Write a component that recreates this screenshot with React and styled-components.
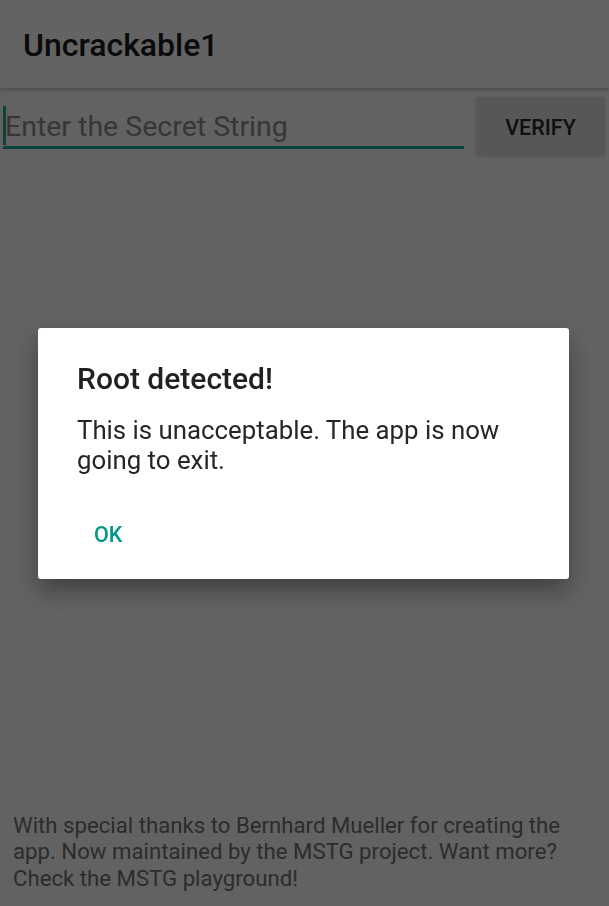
import React from "react";
import styled, { createGlobalStyle } from "styled-components";

const GlobalStyle = createGlobalStyle`
  html, body {
    margin: 0;
    padding: 0;
    height: 100%;
  }
  body {
    font-family: Roboto, "Noto Sans", "Liberation Sans", sans-serif;
    background: #f5f5f5;
    color: #212121;
  }
  #root {
    height: 100%;
  }
`;

const Screen = styled.div`
  display: flex;
  flex-direction: column;
  min-height: 100vh;
  background: #f5f5f5;
`;

const AppBar = styled.header`
  height: 88px;
  display: flex;
  align-items: center;
  padding: 0 23px;
  background: #f7f7f7;
  box-shadow: 0 2px 4px rgba(0, 0, 0, 0.22);
  position: relative;
  z-index: 1;
`;

const Title = styled.h1`
  margin: 2px 0 0;
  font-size: 32px;
  font-weight: 500;
  color: #1a1a1a;
`;

const Row = styled.div`
  display: flex;
  align-items: flex-start;
  gap: 12px;
  padding: 9px 4px 0 3px;
`;

const Field = styled.div`
  flex: 1;
  height: 42px;
  display: flex;
  align-items: center;
  border-bottom: 3px solid #1fa896;
  margin-top: 7px;
`;

const Caret = styled.span`
  width: 3px;
  height: 39px;
  background: #1fa896;
  margin-right: -1px;
`;

const Hint = styled.span`
  font-size: 28.5px;
  color: #888;
  padding-top: 2px;
`;

const VerifyButton = styled.button`
  width: 129px;
  height: 58px;
  border: none;
  border-radius: 3px;
  background: #dadada;
  box-shadow: 0 1px 3px rgba(0, 0, 0, 0.2);
  font-family: inherit;
  font-size: 21.5px;
  font-weight: 500;
  color: #262626;
  padding: 2px 0 0;
`;

const Credits = styled.p`
  margin: auto 0 0;
  padding: 0 13px 15px;
  font-size: 22.2px;
  line-height: 26.5px;
  color: #6e6e6e;
`;

const Scrim = styled.div`
  position: fixed;
  inset: 0;
  background: rgba(0, 0, 0, 0.6);
  display: flex;
  align-items: center;
  justify-content: center;
  z-index: 10;
`;

const Dialog = styled.div`
  width: 531px;
  height: 251px;
  box-sizing: border-box;
  background: #fff;
  border-radius: 3px;
  box-shadow: 0 12px 24px rgba(0, 0, 0, 0.35);
  padding: 32px 39px 0;
  display: flex;
  flex-direction: column;
  margin-right: 2px;
`;

const DialogTitle = styled.h2`
  margin: 0;
  font-size: 30px;
  font-weight: 500;
  line-height: 38px;
  color: #212121;
`;

const DialogText = styled.p`
  margin: 17px 0 0;
  font-size: 25.8px;
  line-height: 30px;
  color: #262626;
`;

const DialogActions = styled.div`
  display: flex;
  margin-top: 47px;
`;

const TextButton = styled.button`
  border: none;
  background: none;
  padding: 0 0 0 17px;
  font-family: inherit;
  font-size: 21.5px;
  font-weight: 500;
  color: #009688;
`;

export default function App() {
  return (
    <>
      <GlobalStyle />
      <Screen>
        <AppBar>
          <Title>Uncrackable1</Title>
        </AppBar>
        <Row>
          <Field>
            <Caret />
            <Hint>Enter the Secret String</Hint>
          </Field>
          <VerifyButton>VERIFY</VerifyButton>
        </Row>
        <Credits>
          With special thanks to Bernhard Mueller for creating the app. Now
          maintained by the MSTG project. Want more? Check the MSTG playground!
        </Credits>
      </Screen>
      <Scrim>
        <Dialog>
          <DialogTitle>Root detected!</DialogTitle>
          <DialogText>
            This is unacceptable. The app is now going to exit.
          </DialogText>
          <DialogActions>
            <TextButton>OK</TextButton>
          </DialogActions>
        </Dialog>
      </Scrim>
    </>
  );
}
